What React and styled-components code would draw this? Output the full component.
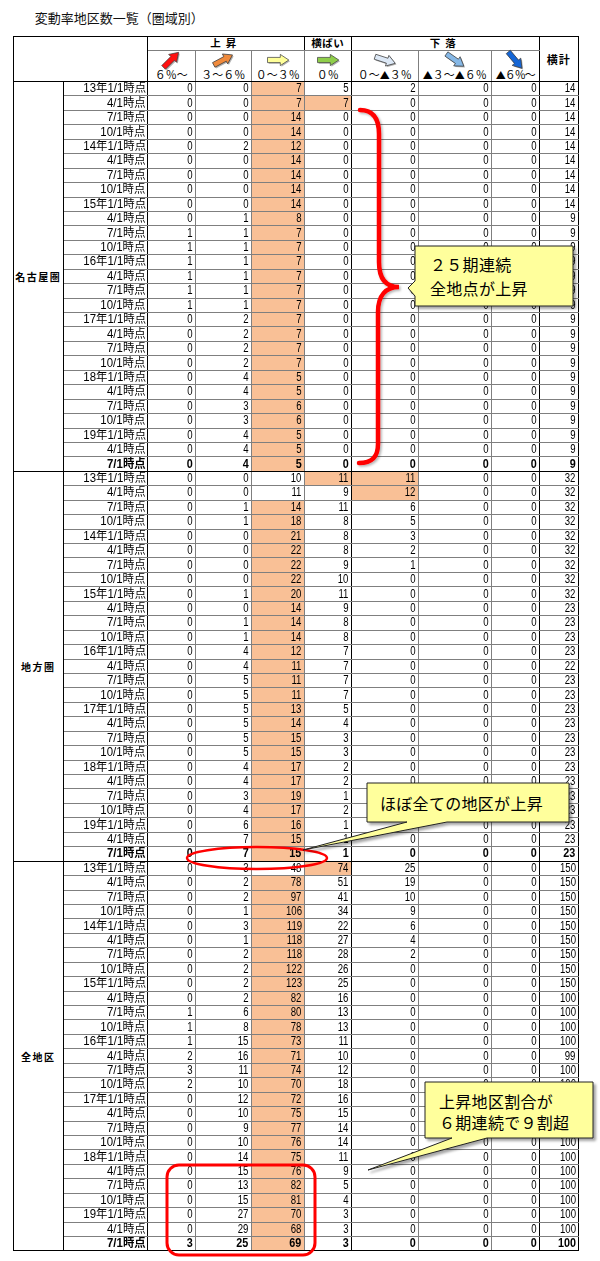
import React from "react";
import styled, { createGlobalStyle } from "styled-components";

const GlobalStyle = createGlobalStyle`
  html, body { margin: 0; padding: 0; background: #fff; }
  body { font-family: "Noto Sans CJK JP", "Noto Sans", sans-serif; color: #000; }
`;

const GRAY = "#7f7f7f";
const BLACK = "#000";
const HL = "#F9C096";
const MIXED = `"Liberation Sans", "Noto Sans CJK JP", sans-serif`;

const COLS = [50, 84, 48, 56, 53, 47, 67, 73, 48, 39];
const EDGE = [BLACK, BLACK, GRAY, GRAY, GRAY, BLACK, GRAY, GRAY, BLACK, BLACK];

const r = (a, b, c, d, e, t) => [a, b, c, d, e, 0, 0, t];

const DATES = [];
[13, 14, 15, 16, 17, 18, 19].forEach((y) =>
  [1, 4, 7, 10].forEach((m) => {
    if (y === 19 && m === 10) return;
    DATES.push(m === 1 ? `${y}年1/1時点` : `${m}/1時点`);
  })
);

const SECTIONS = [
  {
    name: "名古屋圏",
    rows: [
      r(0, 0, 7, 5, 2, 14), r(0, 0, 7, 7, 0, 14), r(0, 0, 14, 0, 0, 14), r(0, 0, 14, 0, 0, 14),
      r(0, 2, 12, 0, 0, 14), r(0, 0, 14, 0, 0, 14), r(0, 0, 14, 0, 0, 14), r(0, 0, 14, 0, 0, 14),
      r(0, 0, 14, 0, 0, 14), r(0, 1, 8, 0, 0, 9), r(1, 1, 7, 0, 0, 9), r(1, 1, 7, 0, 0, 9),
      r(1, 1, 7, 0, 0, 9), r(1, 1, 7, 0, 0, 9), r(1, 1, 7, 0, 0, 9), r(1, 1, 7, 0, 0, 9),
      r(0, 2, 7, 0, 0, 9), r(0, 2, 7, 0, 0, 9), r(0, 2, 7, 0, 0, 9), r(0, 2, 7, 0, 0, 9),
      r(0, 4, 5, 0, 0, 9), r(0, 4, 5, 0, 0, 9), r(0, 3, 6, 0, 0, 9), r(0, 3, 6, 0, 0, 9),
      r(0, 4, 5, 0, 0, 9), r(0, 4, 5, 0, 0, 9), r(0, 4, 5, 0, 0, 9),
    ],
  },
  {
    name: "地方圏",
    rows: [
      r(0, 0, 10, 11, 11, 32), r(0, 0, 11, 9, 12, 32), r(0, 1, 14, 11, 6, 32), r(0, 1, 18, 8, 5, 32),
      r(0, 0, 21, 8, 3, 32), r(0, 0, 22, 8, 2, 32), r(0, 0, 22, 9, 1, 32), r(0, 0, 22, 10, 0, 32),
      r(0, 1, 20, 11, 0, 32), r(0, 0, 14, 9, 0, 23), r(0, 1, 14, 8, 0, 23), r(0, 1, 14, 8, 0, 23),
      r(0, 4, 12, 7, 0, 23), r(0, 4, 11, 7, 0, 22), r(0, 5, 11, 7, 0, 23), r(0, 5, 11, 7, 0, 23),
      r(0, 5, 13, 5, 0, 23), r(0, 5, 14, 4, 0, 23), r(0, 5, 15, 3, 0, 23), r(0, 5, 15, 3, 0, 23),
      r(0, 4, 17, 2, 0, 23), r(0, 4, 17, 2, 0, 23), r(0, 3, 19, 1, 0, 23), r(0, 4, 17, 2, 0, 23),
      r(0, 6, 16, 1, 0, 23), r(0, 7, 15, 1, 0, 23), r(0, 7, 15, 1, 0, 23),
    ],
  },
  {
    name: "全地区",
    rows: [
      r(0, 3, 48, 74, 25, 150), r(0, 2, 78, 51, 19, 150), r(0, 2, 97, 41, 10, 150), r(0, 1, 106, 34, 9, 150),
      r(0, 3, 119, 22, 6, 150), r(0, 1, 118, 27, 4, 150), r(0, 2, 118, 28, 2, 150), r(0, 2, 122, 26, 0, 150),
      r(0, 2, 123, 25, 0, 150), r(0, 2, 82, 16, 0, 100), r(1, 6, 80, 13, 0, 100), r(1, 8, 78, 13, 0, 100),
      r(1, 15, 73, 11, 0, 100), r(2, 16, 71, 10, 0, 99), r(3, 11, 74, 12, 0, 100), r(2, 10, 70, 18, 0, 100),
      r(0, 12, 72, 16, 0, 100), r(0, 10, 75, 15, 0, 100), r(0, 9, 77, 14, 0, 100), r(0, 10, 76, 14, 0, 100),
      r(0, 14, 75, 11, 0, 100), r(0, 15, 76, 9, 0, 100), r(0, 13, 82, 5, 0, 100), r(0, 15, 81, 4, 0, 100),
      r(0, 27, 70, 3, 0, 100), r(0, 29, 68, 3, 0, 100), r(3, 25, 69, 3, 0, 100),
    ],
  },
];

const ARROWS = [
  { fill: "#ff1010", angle: -45, label: "６％～" },
  { fill: "#f08a3c", angle: -28, label: "３～６％" },
  { fill: "#ffff99", angle: 0, label: "０～３％" },
  { fill: "#8fce4a", angle: 0, label: "０％" },
  { fill: "#dce8f6", angle: 18, label: "０～▲３％" },
  { fill: "#86b8e6", angle: 35, label: "▲３～▲６％" },
  { fill: "#1566d6", angle: 50, label: "▲６％～", tight: true },
];

/* ---------- layout ---------- */

const Page = styled.div`
  position: relative;
  width: 600px;
  height: 1261px;
  padding: 9px 0 0 12.7px;
  box-sizing: border-box;
  background: #fff;
  overflow: hidden;
`;

const Title = styled.h1`
  margin: 0 0 10px 22px;
  height: 17px;
  font: 400 13px/17px "Noto Sans CJK JP", sans-serif;
  color: #111;
`;

const Sheet = styled.table`
  border-collapse: collapse;
  table-layout: fixed;
  width: 565px;
  border: 1px solid ${BLACK};
  font-family: ${MIXED};
`;

const HeadRow = styled.tr`
  height: ${(p) => p.$h}px;
`;

const Corner = styled.th`
  padding: 0;
  border-right: 1px solid ${BLACK};
  border-bottom: 1px solid ${BLACK};
`;

const GroupTh = styled.th`
  padding: 0;
  font-family: ${MIXED};
  font-size: 10.5px;
  line-height: 13px;
  font-weight: 700;
  letter-spacing: ${(p) => p.$spread}px;
  text-align: center;
  border-right: 1px solid ${BLACK};
  border-bottom: 1px solid ${GRAY};
`;

const TotalTh = styled.th`
  padding: 0;
  font-family: ${MIXED};
  font-size: 11px;
  font-weight: 700;
  letter-spacing: 1px;
  text-align: center;
  vertical-align: middle;
  border-right: 1px solid ${BLACK};
  border-bottom: 1px solid ${BLACK};
`;

const ArrowTh = styled.th`
  padding: 0;
  text-align: center;
  vertical-align: middle;
  border-right: 1px solid ${(p) => p.$edge};
  border-bottom: none;
  line-height: 0;
`;

const PctTh = styled.th`
  padding: 0;
  font-family: ${MIXED};
  font-size: 11px;
  line-height: 12px;
  font-weight: 400;
  letter-spacing: ${(p) => (p.$tight ? "-1px" : "0")};
  white-space: nowrap;
  text-align: center;
  vertical-align: bottom;
  border-right: 1px solid ${(p) => p.$edge};
  border-bottom: 1px solid ${BLACK};
`;

const Tri = styled.span`
  font-family: "Noto Sans CJK JP", sans-serif;
  font-size: 10px;
`;

const DataRow = styled.tr`
  height: 14.44px;
`;

const RegionCell = styled.td`
  padding: 0;
  text-align: center;
  vertical-align: middle;
  white-space: nowrap;
  font-family: "Noto Sans CJK JP", sans-serif;
  font-size: 10px;
  font-weight: 700;
  letter-spacing: 1.5px;
  border-right: 1px solid ${BLACK};
  border-bottom: 1px solid ${BLACK};
`;

const DateCell = styled.td`
  padding: 0 1px 0 0;
  text-align: right;
  white-space: nowrap;
  overflow: hidden;
  font-family: ${MIXED};
  font-size: 12px;
  line-height: 13px;
  font-weight: ${(p) => (p.$bold ? 700 : 400)};
  border-right: 1px solid ${BLACK};
  border-bottom: 1px solid ${(p) => (p.$end ? BLACK : GRAY)};
`;

const DateText = styled.span`
  display: inline-block;
  transform: scaleX(0.95);
  transform-origin: right center;
`;

const NumCell = styled.td`
  padding: 0 2px 0 0;
  text-align: right;
  white-space: nowrap;
  overflow: hidden;
  font-family: "Liberation Sans", Arial, sans-serif;
  font-size: 12px;
  line-height: 13px;
  font-weight: ${(p) => (p.$bold ? 700 : 400)};
  background: ${(p) => (p.$hl ? HL : "transparent")};
  border-right: 1px solid ${(p) => p.$edge};
  border-bottom: 1px solid ${(p) => (p.$end ? BLACK : GRAY)};
`;

const NumText = styled.span`
  display: inline-block;
  transform: scaleX(${(p) => (p.$bold ? 0.9 : 0.8)});
  transform-origin: right center;
`;

const Overlay = styled.svg`
  position: absolute;
  left: 0;
  top: 0;
  pointer-events: none;
  overflow: visible;
`;

const CalloutText = styled.div`
  position: absolute;
  left: ${(p) => p.$x}px;
  top: ${(p) => p.$y}px;
  font-family: "Noto Sans CJK JP", sans-serif;
  font-size: 16px;
  line-height: ${(p) => p.$lh}px;
  color: #000;
  white-space: pre;
  letter-spacing: 0.3px;
`;

/* ---------- parts ---------- */

const ARROW_PTS = "-10.5,-2.6 2.3,-2.6 2.3,-5.6 10.8,0 2.3,5.6 2.3,2.6 -10.5,2.6";

const Arrow = ({ fill, angle }) => (
  <svg width="26" height="18" viewBox="-13 -9 26 18" style={{ overflow: "visible" }}>
    <polygon points={ARROW_PTS} transform={`translate(1.2 1.2) rotate(${angle})`} fill="rgba(0,0,0,0.3)" />
    <polygon
      points={ARROW_PTS}
      transform={`rotate(${angle})`}
      fill={fill}
      stroke="#3a3a3a"
      strokeWidth="0.7"
      strokeLinejoin="round"
    />
  </svg>
);

const PctLabel = ({ text }) =>
  text.split(/(▲)/).map((part, i) => (part === "▲" ? <Tri key={i}>▲</Tri> : part));

const Section = ({ name, rows }) =>
  rows.map((row, i) => {
    const end = i === rows.length - 1;
    const max = Math.max(...row.slice(0, 7));
    return (
      <DataRow key={name + i}>
        {i === 0 && <RegionCell rowSpan={rows.length}>{name}</RegionCell>}
        <DateCell $end={end} $bold={end}>
          <DateText>{DATES[i]}</DateText>
        </DateCell>
        {row.map((v, j) => (
          <NumCell
            key={j}
            $edge={EDGE[j + 2]}
            $end={end}
            $bold={end}
            $hl={j < 7 && v === max && max > 0}
          >
            <NumText $bold={end}>{v}</NumText>
          </NumCell>
        ))}
      </DataRow>
    );
  });

const Drawings = () => (
  <Overlay width="600" height="1261" viewBox="0 0 600 1261">
    <defs>
      <filter id="sh" x="-20%" y="-20%" width="140%" height="140%">
        <feDropShadow dx="2.5" dy="2.5" stdDeviation="1.2" floodColor="#000" floodOpacity="0.35" />
      </filter>
      <filter id="sh2" x="-20%" y="-20%" width="140%" height="140%">
        <feDropShadow dx="1.5" dy="1.5" stdDeviation="1" floodColor="#000" floodOpacity="0.3" />
      </filter>
    </defs>

    {/* curly brace */}
    <path
      d="M360 110 C373 110 379 118 379 134 L379 262 C379 279 386 287 399 287 C386 287 378 295 378 312 L378 444 C378 457 372 463 359 463"
      fill="none"
      stroke="#ff0000"
      strokeWidth="4.5"
      strokeLinecap="round"
      filter="url(#sh2)"
    />

    {/* callout 1 */}
    <path
      d="M415 246 L573 246 L573 306 L415 306 L415 296 L408 288 L415 281 Z"
      fill="#ffff9c"
      stroke="#222"
      strokeWidth="1"
      filter="url(#sh)"
    />

    {/* ellipse */}
    <ellipse cx="257" cy="858" rx="70" ry="11" fill="none" stroke="#ff0000" strokeWidth="2.5" />

    {/* callout 2 */}
    <path
      d="M367 783 L569 783 L569 822 L447 822 L303 850 L407 822 L367 822 Z"
      fill="#ffff9c"
      stroke="#222"
      strokeWidth="1"
      filter="url(#sh)"
    />

    {/* rounded rect */}
    <rect x="167" y="1165" width="148" height="90" rx="12" fill="none" stroke="#ff0000" strokeWidth="3" />

    {/* callout 3 */}
    <path
      d="M425 1082 L593 1082 L593 1138 L487 1138 L368 1170 L452 1138 L425 1138 Z"
      fill="#ffff9c"
      stroke="#222"
      strokeWidth="1"
      filter="url(#sh)"
    />
  </Overlay>
);

export default function App() {
  return (
    <Page>
      <GlobalStyle />
      <Title>変動率地区数一覧（圏域別）</Title>
      <Sheet>
        <colgroup>
          {COLS.map((w, i) => (
            <col key={i} style={{ width: w }} />
          ))}
        </colgroup>
        <thead>
          <HeadRow $h={14}>
            <Corner colSpan={2} rowSpan={3} />
            <GroupTh colSpan={3} $spread={5}>上昇</GroupTh>
            <GroupTh $spread={0.5}>横ばい</GroupTh>
            <GroupTh colSpan={3} $spread={5}>下落</GroupTh>
            <TotalTh rowSpan={3}>横計</TotalTh>
          </HeadRow>
          <HeadRow $h={18}>
            {ARROWS.map((a, i) => (
              <ArrowTh key={i} $edge={EDGE[i + 2]}>
                <Arrow fill={a.fill} angle={a.angle} />
              </ArrowTh>
            ))}
          </HeadRow>
          <HeadRow $h={12}>
            {ARROWS.map((a, i) => (
              <PctTh key={i} $edge={EDGE[i + 2]} $tight={a.tight}>
                <PctLabel text={a.label} />
              </PctTh>
            ))}
          </HeadRow>
        </thead>
        <tbody>
          {SECTIONS.map((s) => (
            <Section key={s.name} name={s.name} rows={s.rows} />
          ))}
        </tbody>
      </Sheet>
      <Drawings />
      <CalloutText $x={430} $y={252} $lh={24}>{"２５期連続\n全地点が上昇"}</CalloutText>
      <CalloutText $x={380} $y={791} $lh={24}>ほぼ全ての地区が上昇</CalloutText>
      <CalloutText $x={439} $y={1091} $lh={21}>{"上昇地区割合が\n６期連続で９割超"}</CalloutText>
    </Page>
  );
}
